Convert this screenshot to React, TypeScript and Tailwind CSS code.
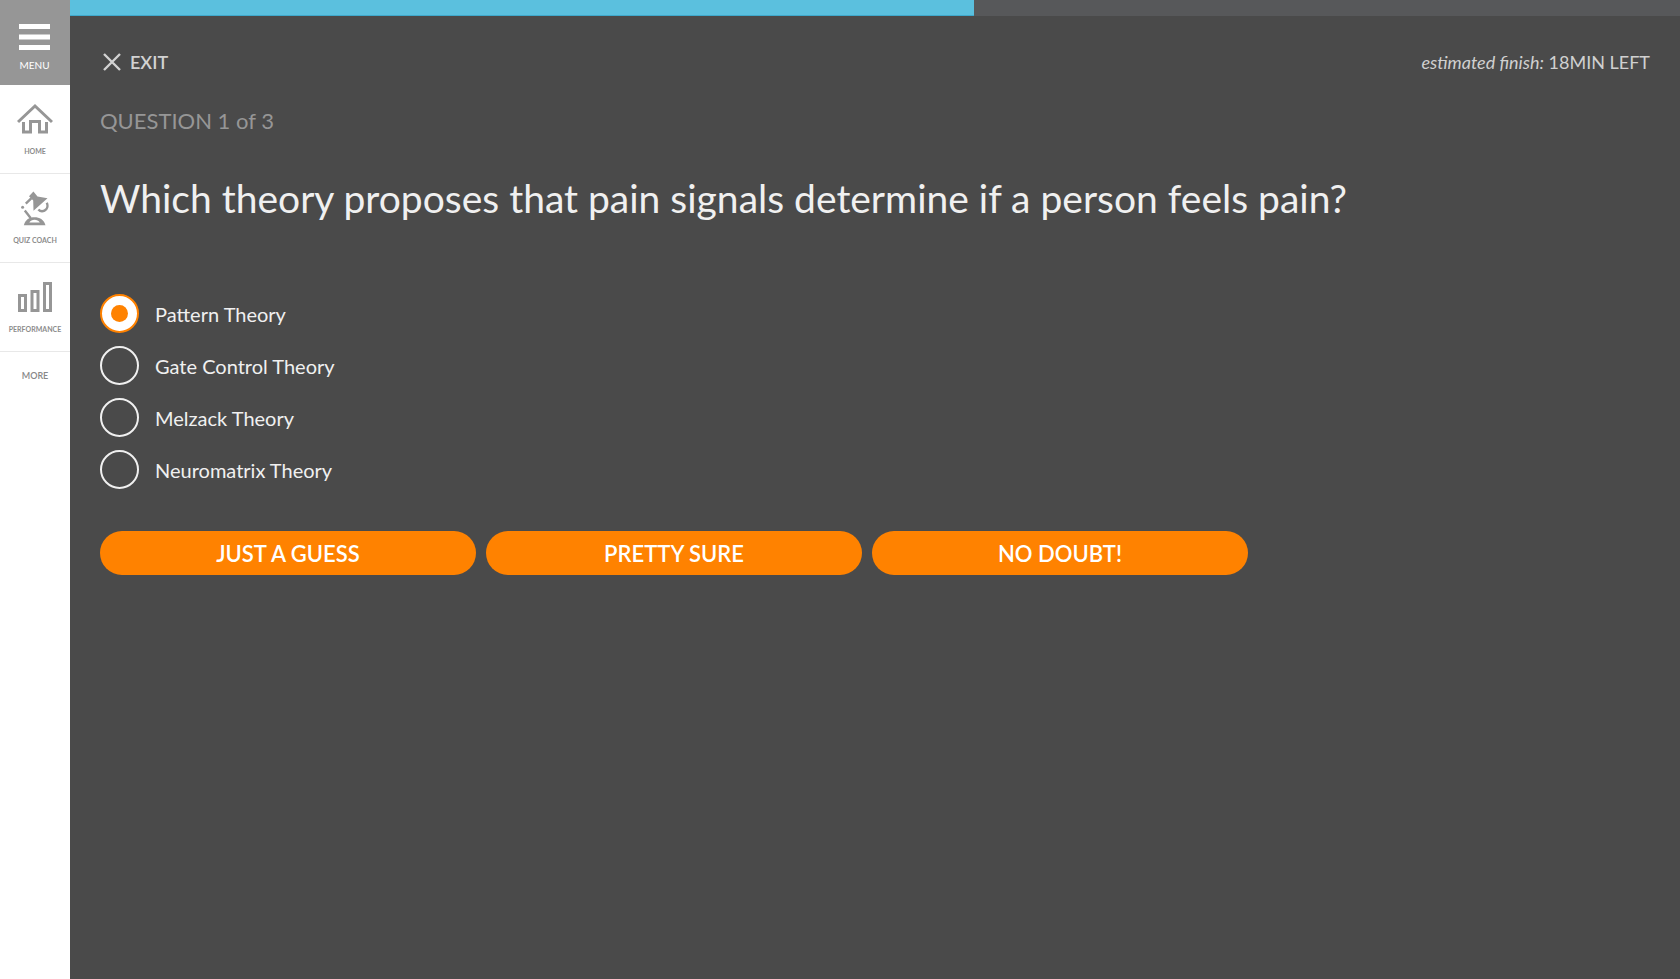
import { useState } from 'react';
import type { ReactNode } from 'react';

const theories = ['Pattern Theory', 'Gate Control Theory', 'Melzack Theory', 'Neuromatrix Theory'];
const confidences = ['JUST A GUESS', 'PRETTY SURE', 'NO DOUBT!'];

function HomeIcon() {
  return (
    <svg width="36" height="32" viewBox="0 0 36 32" fill="none" stroke="#969696" strokeWidth="3" aria-hidden="true">
      <path d="M1 19 18 3 35 19" />
      <path d="M6.500 19v10h7V18.500h9V29h7V19" />
    </svg>
  );
}

function LampIcon() {
  return (
    <svg width="28" height="36" viewBox="1 0 28 36" fill="none" stroke="#969696" strokeWidth="2.4" aria-hidden="true">
      <path d="M9 6.200 13.400 1.500 17.500 6.400 27.500 8.300 13.500 20.800 13.200 10.500Z" fill="#969696" stroke="none" />
      <path d="M11.500 8.200 5.800 13.600M4.800 20.600 10.800 28.200" />
      <circle cx="2.600" cy="17.300" r="1.500" fill="#969696" stroke="none" />
      <path d="M26.800 12.800c1.400 3.200.4 6.600-2.300 7.900-2.300 1.100-4.600.5-6.100-1.300" />
      <path d="M3.800 35.200C5.400 29.600 9.400 27.300 14.500 27.300s9.300 2.300 11 7.900Z" fill="#969696" stroke="none" />
      <path d="M9.300 32.500c1.200-2 3-2.800 5.200-2.800s4.100.8 5.300 2.800Z" fill="#fff" stroke="none" />
    </svg>
  );
}

function BarsIcon() {
  return (
    <svg width="34" height="32" viewBox="0 0 34 32" fill="none" stroke="#969696" strokeWidth="3" aria-hidden="true">
      <path d="M1.500 14.500h6v15h-6ZM14 10.500h6v19h-6ZM26.500 2.500h6v27h-6Z" />
    </svg>
  );
}

function NavItem({ label, children }: { label: string; children: ReactNode }) {
  return (
    <a
      href="#"
      className="flex flex-col items-center gap-2 border-b border-[#e8e8e8] pt-4 text-[7px] font-bold leading-[10px] text-[#8c8c8c]"
    >
      <span className="flex h-9 items-center">{children}</span>
      <span className="pb-[17px] pt-px">{label}</span>
    </a>
  );
}

export default function App() {
  const [answer, setAnswer] = useState(theories[0]);

  return (
    <div className="flex min-h-screen bg-[#4a4a4a] font-['Lato',sans-serif]">
      <nav className="flex w-[70px] shrink-0 flex-col bg-white">
        <button type="button" className="flex h-[85px] flex-col items-center gap-[7px] bg-[#969696] pr-px pt-6 text-white">
          <svg width="31" height="27" viewBox="0 0 31 27" fill="#fff" aria-hidden="true">
            <path d="M0 0h31v5H0ZM0 10.500h31v5H0ZM0 21h31v5H0Z" />
          </svg>
          <span className="text-[10px] leading-[14px]">MENU</span>
        </button>
        <NavItem label="HOME">
          <HomeIcon />
        </NavItem>
        <NavItem label="QUIZ COACH">
          <LampIcon />
        </NavItem>
        <NavItem label="PERFORMANCE">
          <BarsIcon />
        </NavItem>
        <a href="#" className="pt-4 text-center text-[9px] font-semibold leading-4 text-[#888888]">
          MORE
        </a>
      </nav>

      <div className="min-w-0 flex-1">
        <div
          role="progressbar"
          aria-label="Quiz progress"
          aria-valuenow={56}
          aria-valuemin={0}
          aria-valuemax={100}
          className="h-4 bg-[#57585a]"
        >
          <div className="h-full w-[56.15%] border-b border-[#3fa9cc] bg-[#5bc0de]" />
        </div>

        <main className="px-[30px]">
          <header className="flex items-center justify-between pt-8 leading-7">
            <button type="button" className="flex items-center gap-[9px] pl-[3px] text-[18px] font-semibold text-[#d2d2d2]">
              <svg width="18" height="18" viewBox="0 0 18 18" fill="none" stroke="currentColor" strokeWidth="2.4" aria-hidden="true">
                <path d="m1 1 16 16M17 1 1 17" />
              </svg>
              EXIT
            </button>
            <p className="text-[18px] text-[#d0d0d0]">
              <em>estimated finish:</em> 18MIN LEFT
            </p>
          </header>

          <p className="mt-7 text-[22px] leading-[34px] text-[#969696]">QUESTION 1 of 3</p>
          <h1 className="mt-8 text-[39px] leading-[56px] text-[#f0f0f0]">
            Which theory proposes that pain signals determine if a person feels pain?
          </h1>

          <div role="radiogroup" aria-label="Answers" className="mt-[68px] flex flex-col items-start gap-[13px]">
            {theories.map((theory) => (
              <label key={theory} className="flex items-center gap-4 text-[20px] leading-7 text-[#f0f0f0]">
                <input
                  type="radio"
                  name="answer"
                  checked={answer === theory}
                  onChange={() => setAnswer(theory)}
                  className="grid size-[39px] shrink-0 appearance-none place-items-center rounded-full border-2 border-[#f0f0f0] before:size-[17px] before:rounded-full checked:border-[#ff8200] checked:bg-white checked:before:bg-[#ff8200]"
                />
                {theory}
              </label>
            ))}
          </div>

          <div className="mt-[42px] grid max-w-[1148px] grid-cols-3 gap-[10px]">
            {confidences.map((label) => (
              <button
                key={label}
                type="button"
                className="h-11 rounded-full bg-[#ff8200] text-[22px] font-semibold text-white"
              >
                {label}
              </button>
            ))}
          </div>
        </main>
      </div>
    </div>
  );
}
